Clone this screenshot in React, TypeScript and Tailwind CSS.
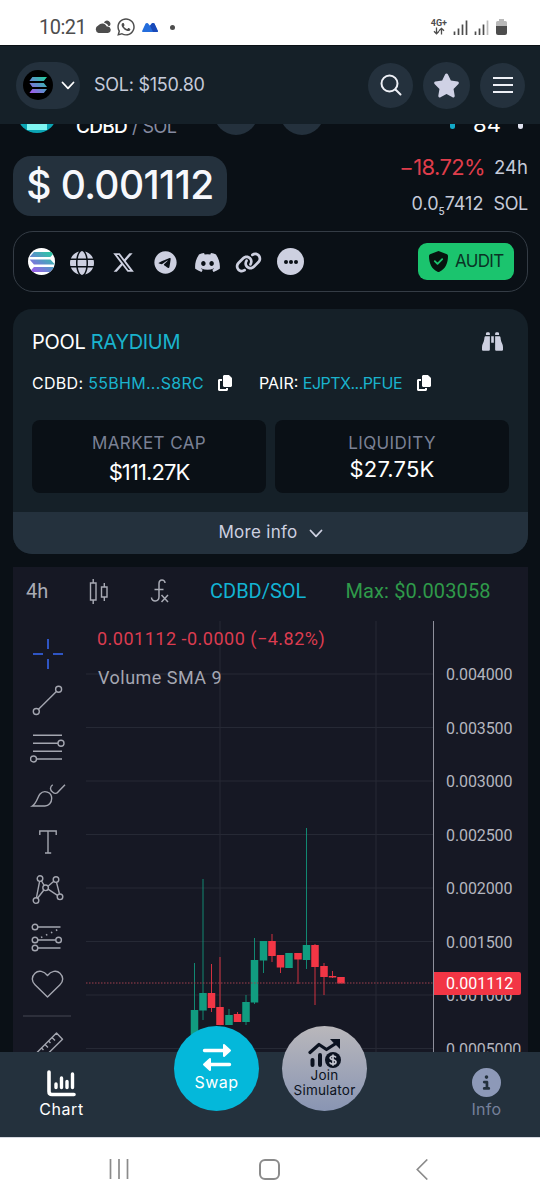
import React from 'react';
import {
  FaBinoculars,
  FaCircleInfo,
  FaCopy,
  FaDiscord,
  FaGlobe,
  FaLink,
  FaStar,
  FaTelegram,
  FaWhatsapp,
  FaXTwitter,
} from 'react-icons/fa6';

interface Candle {
  x: number;
  open: number;
  close: number;
  high: number;
  low: number;
  up: boolean;
}

// pixel positions inside the plot, open/close are top and bottom of the body
const candles: Candle[] = [
  { x: 109.5, open: 389, close: 431, high: 342, low: 431, up: true },
  { x: 118, open: 372, close: 389.5, high: 258, low: 399, up: true },
  { x: 126.5, open: 372, close: 387, high: 343, low: 391, up: false },
  { x: 135, open: 386, close: 404, high: 336, low: 404, up: false },
  { x: 144, open: 394, close: 404, high: 388, low: 404, up: true },
  { x: 152.5, open: 393, close: 401, high: 391, low: 401, up: false },
  { x: 161, open: 381, close: 401, high: 374, low: 404, up: true },
  { x: 169.5, open: 339, close: 381.5, high: 317, low: 383, up: true },
  { x: 178.5, open: 320, close: 339.5, high: 320, low: 352, up: true },
  { x: 187, open: 320, close: 335, high: 313, low: 341, up: false },
  { x: 195.5, open: 334, close: 346.5, high: 334, low: 352, up: false },
  { x: 204, open: 332, close: 347, high: 332, low: 347, up: true },
  { x: 213, open: 332, close: 338.5, high: 332, low: 363, up: false },
  { x: 221.5, open: 324, close: 339, high: 207, low: 348, up: true },
  { x: 230, open: 324, close: 346, high: 323, low: 384, up: false },
  { x: 239, open: 345, close: 356, high: 342, low: 374, up: false },
  { x: 247.5, open: 355, close: 356.5, high: 350, low: 357, up: false },
  { x: 256, open: 356, close: 362.5, high: 356, low: 362, up: false },
];

const prices = ['0.004000', '0.003500', '0.003000', '0.002500', '0.002000', '0.001500', '0.001000', '0.0005000'];

const gridRows = [53, 106.5, 160, 213.5, 267, 320.5, 374, 427.5];

const SolanaMark = ({ className }: { className: string }) => (
  <svg className={className} viewBox="0 0 18 16" preserveAspectRatio="none">
    <defs>
      <linearGradient id="sol" gradientUnits="userSpaceOnUse" x1="2" y1="16" x2="16" y2="0">
        <stop offset="0" stopColor="#a259ee" />
        <stop offset="0.5" stopColor="#5b91c9" />
        <stop offset="1" stopColor="#26cda0" />
      </linearGradient>
    </defs>
    <path fill="url(#sol)" d="M3.4 0H18l-3.2 4H.4zM.4 6h14.4L18 10H3.400zM3.400 12H18l-3.200 4H.4z" />
  </svg>
);

const ChevronDown = ({ className }: { className: string }) => (
  <svg className={className} viewBox="0 0 14 9" fill="none" stroke="currentColor" strokeWidth="1.800" strokeLinecap="round" strokeLinejoin="round">
    <path d="M1.500 1.500 7 7.300l5.500-5.800" />
  </svg>
);

const StatusBar = () => (
  <div className="flex h-[45px] shrink-0 items-center bg-white pt-[9px] pl-[39px] pr-[33px] text-[#4d4d4d]">
    <span className="font-[Roboto,sans-serif] text-[20px] leading-none tracking-[-0.5px]">10:21</span>
    <svg className="ml-2 h-[14px] w-[18px]" viewBox="0 0 18 14" fill="currentColor">
      <path d="M4.500 13a4 4 0 0 1-.3-7.500A5 5 0 0 1 12.800 6.500a3.300 3.300 0 0 1 1.200 6.500z" />
      <path d="M10 2.800a3.300 3.300 0 1 1 5.800 3l-1.300.4C14 4.500 12.200 3 10 2.800z" />
    </svg>
    <FaWhatsapp className="ml-1 h-5 w-5" />
    <svg className="ml-[6px] h-[9px] w-[16px]" viewBox="0 0 16 9">
      <path fill="#246ddc" d="M0 8.200 3.600.6Q4 0 5 0t1.500 1L8 2.800l1.500-2Q10 0 11 0t1.400.6L16 8.200q0 .8-1 .8H1q-1 0-1-.8z" />
      <path fill="#1949b8" d="M8 2.800 9.500.8Q10 0 11 0t1.400.6L16 8.200q0 .8-1 .8h-4z" />
    </svg>
    <span className="ml-[12px] h-[5px] w-[5px] rounded-full bg-[#4d4d4d]" />
    <div className="ml-auto flex items-center">
      <div className="flex flex-col items-center">
        <span className="font-[Roboto,sans-serif] text-[9px] leading-[8px] font-bold">4G+</span>
        <svg className="h-[8px] w-[12px]" viewBox="0 0 12 8" fill="none" stroke="currentColor" strokeWidth="1.300">
          <path d="M3.500.5v6M1 4.300l2.500 2.500L6 4.300M8.500 7.500v-6M6 3.800l2.500-2.500L11 3.800" />
        </svg>
      </div>
      <svg className="ml-[6px] h-[15px] w-[15px]" viewBox="0 0 15 15" stroke="currentColor" strokeWidth="1.700">
        <path d="M1.500 11.500V15M5.500 8.500V15M9.500 4.500V15M13.500.5V15" />
      </svg>
      <svg className="ml-[6px] h-[15px] w-[15px]" viewBox="0 0 15 15" stroke="currentColor" strokeWidth="1.700">
        <path d="M1.500 11.500V15M5.500 8.500V15M9.500 4.500V15" />
        <path stroke="#bdbdbd" d="M13.500.5V15" />
      </svg>
      <svg className="ml-[7px] h-[16px] w-[11px]" viewBox="0 0 11 16">
        <path fill="#b9b9b9" d="M3 0h5v2h1.500Q11 2 11 3.500V8H0V3.500Q0 2 1.500 2H3z" />
        <path fill="#4d4d4d" d="M0 7h11v7q0 2-2 2H2q-2 0-2-2z" />
      </svg>
    </div>
  </div>
);

const Header = () => (
  <header className="z-10 flex h-[79px] shrink-0 items-center border-t border-[#0b1116] bg-[#152028] pl-4 pr-[15px]">
    <div className="flex h-[47px] w-16 items-center rounded-full bg-[#24313d] pl-[7px]">
      <div className="flex h-[30px] w-[30px] items-center justify-center rounded-full bg-black">
        <SolanaMark className="h-4 w-[18px]" />
      </div>
      <ChevronDown className="ml-2 h-[9px] w-[14px] text-white" />
    </div>
    <span className="ml-[14px] -mt-px text-[18px] tracking-[-0.250px] text-[#c5cad9]">SOL: $150.80</span>
    <div className="ml-auto flex items-center gap-[10px]">
      <div className="flex h-[45px] w-[45px] items-center justify-center rounded-full bg-[#24313d]">
        <svg className="h-[22px] w-[22px] text-[#eef0f6]" viewBox="0 0 22 22" fill="none" stroke="currentColor" strokeWidth="2" strokeLinecap="round">
          <circle cx="9.500" cy="9.500" r="8" />
          <path d="m15.500 15.500 5 5" />
        </svg>
      </div>
      <div className="flex h-[47px] w-[47px] items-center justify-center rounded-full bg-[#24313d]">
        <FaStar className="h-[27px] w-[27px] text-[#cfd1e5]" />
      </div>
      <div className="flex h-[45px] w-[45px] flex-col items-center justify-center gap-[5px] rounded-full bg-[#24313d]">
        <span className="h-[2px] w-5 bg-[#eef0f6]" />
        <span className="h-[2px] w-5 bg-[#eef0f6]" />
        <span className="h-[2px] w-5 bg-[#eef0f6]" />
      </div>
    </div>
  </header>
);

// scrolled half way under the header
const TokenRow = () => (
  <div className="-mt-[34px] flex h-[46px] shrink-0 items-end leading-none whitespace-nowrap">
    <div className="ml-[4px] mb-[3px] flex h-10 w-10 shrink-0 items-end justify-center overflow-hidden rounded-full bg-[#0ba5b4]">
      <span className="mb-[3px] h-5 w-5 bg-[#7ff6f2]" />
    </div>
    <span className="ml-[19px] w-[52px] text-[19px] font-medium tracking-[-0.700px] text-white">CDBD</span>
    <span className="ml-[4px] w-[46px] text-[18px] tracking-[-0.500px] text-[#858aa0]">/ SOL</span>
    <span className="ml-[36px] mb-px h-[44px] w-[44px] shrink-0 rounded-full bg-[#24313d]" />
    <span className="ml-[22px] mb-px h-[44px] w-[44px] shrink-0 rounded-full bg-[#24313d]" />
    <span className="mb-[7px] ml-[126px] h-[14px] w-[5px] shrink-0 rounded-b-full bg-[#12a9c8]" />
    <span className="ml-[17px] mb-px w-[30px] text-center text-[22px] text-white">84</span>
    <span className="mb-[7px] ml-[16px] h-[14px] w-[5px] shrink-0 rounded-b-full bg-[#dfe1ee]" />
  </div>
);

const PriceRow = () => (
  <div className="mt-[20px] flex h-[60px] shrink-0 justify-between">
    <div className="flex h-[60px] w-[214px] items-center justify-center rounded-[18px] bg-[#24313d]">
      <span className="mb-px whitespace-nowrap text-[39px] font-medium tracking-[-0.600px] text-[#f7f8fc]">$ 0.001112</span>
    </div>
    <div className="flex flex-col items-end whitespace-nowrap">
      <div className="flex h-[23px] items-center gap-[9px]">
        <span className="text-[22px] tracking-[-0.600px] text-[#df3d4b]">−18.72%</span>
        <span className="text-[18.5px] text-[#c5cad9]">24h</span>
      </div>
      <div className="mt-[13px] flex h-[23px] items-center gap-[10px] text-[18px] text-[#c5cad9]">
        <span>
          0.0<span className="relative top-[5px] text-[10px] font-medium">5</span>7412
        </span>
        <span className="tracking-[-0.300px]">SOL</span>
      </div>
    </div>
  </div>
);

const LinksBar = () => (
  <div className="mt-[15px] flex h-[61px] shrink-0 items-center rounded-[20px] border border-[#343c45] pl-[14px] pr-[13px] text-[#cdd0e0]">
    <div className="flex h-[27px] w-[27px] items-center justify-center overflow-hidden rounded-full bg-white">
      <SolanaMark className="h-[20px] w-[26px]" />
    </div>
    <FaGlobe className="ml-[15px] mt-[2px] h-[24px] w-[24px]" />
    <FaXTwitter className="ml-[18px] mt-[2px] h-[23px] w-[23px]" />
    <FaTelegram className="ml-[19px] mt-[2px] h-[23px] w-[23px]" />
    <FaDiscord className="ml-[17px] mt-[2px] h-[27px] w-[27px]" />
    <FaLink className="ml-[14px] mt-[2px] h-[27px] w-[27px]" />
    <div className="ml-[15px] flex h-[27px] w-[27px] items-center justify-center gap-px rounded-full bg-[#cdd0e0]">
      <span className="h-1 w-1 rounded-full bg-[#0a1016]" />
      <span className="h-1 w-1 rounded-full bg-[#0a1016]" />
      <span className="h-1 w-1 rounded-full bg-[#0a1016]" />
    </div>
    <div className="ml-auto flex h-[37px] w-[96px] items-center rounded-[9px] bg-[#1bc46e] pl-[11px]">
      <svg className="h-[21px] w-[19px]" viewBox="0 0 19 21">
        <path fill="#07140f" d="M9.500 0 18 3.200Q19 3.600 19 5c0 7-2.500 13-8.500 15.700q-1 .5-2 0C2.500 18 0 12 0 5q0-1.400 1-1.800z" />
        <path fill="none" stroke="#1bc46e" strokeWidth="1.800" strokeLinecap="round" strokeLinejoin="round" d="m5.800 10.200 2.700 2.700 4.700-4.800" />
      </svg>
      <span className="ml-[7px] text-[17px] tracking-[-0.650px] text-[#0a3325]">AUDIT</span>
    </div>
  </div>
);

const StatBox = ({ label, value, lifted }: { label: string; value: string; lifted?: boolean }) => (
  <div className="flex h-[73px] flex-1 flex-col items-center rounded-lg bg-[#0a1016] pt-[11px]">
    <span className="text-[17px] leading-[24px] tracking-[0.400px] text-[#7a8195]">{label}</span>
    <span
      className={`text-[22px] leading-[28px] text-white ${lifted ? 'tracking-[0.200px]' : 'mt-[3px] tracking-[-0.900px]'}`}
    >
      {value}
    </span>
  </div>
);

const PoolCard = () => (
  <section className="mt-[17px] shrink-0 overflow-hidden rounded-[19px] bg-[#152028]">
    <div className="h-[203px] px-[19px]">
      <div className="flex h-[64px] items-center justify-between pr-[6px] pt-px">
        <h2 className="text-[20px] tracking-[-0.300px] text-white">
          POOL <span className="text-[#1ab3cd]">RAYDIUM</span>
        </h2>
        <FaBinoculars className="h-[21px] w-[21px] text-[#cdd0e0]" />
      </div>
      <div className="flex h-[20px] items-center whitespace-nowrap text-[16px] text-white">
        <span className="w-[186px] tracking-[0.300px]">
          CDBD: <span className="text-[#1ab3cd]">55BHM...S8RC</span>
        </span>
        <FaCopy className="h-4 w-[14px]" />
        <span className="ml-[27px] w-[158px]">
          PAIR: <span className="tracking-[-0.500px] text-[#1ab3cd]">EJPTX...PFUE</span>
        </span>
        <FaCopy className="h-4 w-[14px]" />
      </div>
      <div className="mt-[27px] flex gap-[9px]">
        <StatBox label="MARKET CAP" value="$111.27K" />
        <StatBox label="LIQUIDITY" value="$27.75K" lifted />
      </div>
    </div>
    <div className="flex h-[42px] items-center justify-center bg-[#24313d] pb-px text-[#cdd0e0]">
      <span className="text-[17px] tracking-[0.300px]">More info</span>
      <ChevronDown className="ml-[11px] mt-[2px] h-[9px] w-[14px]" />
    </div>
  </section>
);

const tools: { name: string; className: string; art: React.ReactNode }[] = [
  { name: 'cross', className: 'text-[#2f55c4]', art: <path strokeWidth="2" d="M3 18h10M23 18h10M18 3v10M18 23v10" /> },
  {
    name: 'trend',
    className: '',
    art: (
      <>
        <circle cx="6.300" cy="28.500" r="3" />
        <circle cx="28.600" cy="6.300" r="3" />
        <path d="M8.500 26.300 26.400 8.500" />
      </>
    ),
  },
  {
    name: 'fib',
    className: '',
    art: (
      <>
        <path d="M3 5.300h29M3 13.300h25M3 21.300h29M6.500 29H32" />
        <circle cx="31" cy="13.300" r="3" />
        <circle cx="3.500" cy="29" r="3" />
      </>
    ),
  },
  {
    name: 'brush',
    className: '',
    art: (
      <>
        <path d="M2.300 29C7 26 7.500 20 10 17c4-4.500 11.700-2 11.700 4.300 0 4.500-3 7.700-6.700 7.700z" />
        <path d="M22.700 7.700C19.500 10 20 13 22.500 15q3.500 3 6-.5L35 7.700" />
      </>
    ),
  },
  { name: 'text', className: '', art: <path d="M9.800 11V7h16.400v4M18 7v22M15 29h6.200" /> },
  {
    name: 'pattern',
    className: '',
    art: (
      <>
        <circle cx="10" cy="6.600" r="2.800" />
        <circle cx="26" cy="7.600" r="2.800" />
        <circle cx="15.600" cy="15.800" r="2.800" />
        <circle cx="6" cy="28.600" r="2.800" />
        <circle cx="30" cy="24.800" r="2.800" />
        <path d="M9.600 9.400 6.400 25.800M11.500 9l2.700 4.400M18 14.300 23.800 9.300M13.900 18 7.500 26.300M18 17.200l9.500 6.200M26.500 10.400l3 11.600" />
      </>
    ),
  },
  {
    name: 'forecast',
    className: '',
    art: (
      <>
        <circle cx="5" cy="8" r="2.800" />
        <circle cx="5" cy="21" r="2.800" />
        <circle cx="28.600" cy="21" r="2.800" />
        <circle cx="5" cy="29" r="2.800" />
        <path d="M8 8h22.500M8 21h17.800M8 29h22.500" />
        <path strokeDasharray="1.500 4" strokeWidth="1.600" d="M11 18.500 29 10" />
      </>
    ),
  },
  {
    name: 'heart',
    className: '',
    art: <path strokeLinejoin="round" d="M17.500 9.500C14 5 8.500 3.800 5 7.200c-3.700 3.500-3.500 8.300 0 11.600L17.500 31 30 18.800c3.500-3.300 3.700-8.100 0-11.600C26.500 3.800 21 5 17.500 9.500z" />,
  },
];

const DrawingTools = () => (
  <div className="flex h-full w-[72px] flex-col items-start pt-[9px] text-[#a4a6b0]">
    {tools.map((tool) => (
      <div key={tool.name} className="flex h-[47.2px] shrink-0 items-center pl-[17px]">
        <svg className={`h-9 w-9 ${tool.className}`} viewBox="0 0 36 36" fill="none" stroke="currentColor" strokeWidth="1.400">
          {tool.art}
        </svg>
      </div>
    ))}
    <span className="ml-[10px] mt-[7px] h-[2px] w-[48px] shrink-0 bg-[#2d2f3b]" />
    <svg className="ml-[17px] mt-[13px] h-9 w-9 shrink-0" viewBox="0 0 36 36" fill="none" stroke="currentColor" strokeWidth="1.400" strokeLinejoin="round">
      <path d="M26.500 3 32.500 9.200 9 32.500 3 26.500zM22 7.500l3 3M18.500 11l2 2M15 14.500l3 3M11.500 18l2 2" />
    </svg>
  </div>
);

const PricePlot = () => (
  <div className="relative h-[431px] w-[348px]">
    <svg className="h-[431px] w-[348px]" viewBox="0 0 348 431">
      <g stroke="#262935" strokeWidth="1">
        {gridRows.map((y) => (
          <path key={y} d={`M1 ${y}h347`} />
        ))}
        <path d="M135 0v431M291 0v431" />
      </g>
      {candles.map((c) => (
        <g key={c.x} fill={c.up ? '#119c80' : '#f23645'} stroke={c.up ? '#119c80' : '#f23645'}>
          <path strokeWidth="1" strokeOpacity="0.85" d={`M${c.x} ${c.high}V${c.low}`} />
          <rect stroke="none" x={c.x - 3.75} y={c.open} width="7.500" height={c.close - c.open} />
        </g>
      ))}
      <path stroke="#9e3f4d" strokeWidth="1.200" strokeDasharray="1.500 1.500" d="M1 362h347" />
    </svg>
    <div className="absolute top-[9px] left-[12px] flex flex-col whitespace-nowrap">
      <span className="text-[18px] leading-[18px] tracking-[0.500px] text-[#dc3c50]">0.001112 -0.0000 (−4.82%)</span>
      <span className="mt-[21px] ml-px text-[18px] leading-[18px] tracking-[0.480px] text-[#a5a7b2]">Volume SMA 9</span>
    </div>
  </div>
);

const PriceAxis = () => (
  <div className="relative flex h-[431px] w-[95px] flex-col border-l border-[#8e8f9b] pt-[27px] pl-[12px]">
    {prices.map((price) => (
      <span key={price} className="h-[53.5px] shrink-0 text-[16px] leading-[53.500px] tracking-[-0.100px] text-[#b4b5bf]">
        {price}
      </span>
    ))}
    <span className="absolute top-[351px] left-0 flex h-[23px] w-[87px] items-center rounded-r-[2px] bg-[#f23645] pl-[12px] text-[16px] text-white">
      0.001112
    </span>
  </div>
);

const ChartPanel = () => (
  <section className="mt-[13px] h-[485px] shrink-0 bg-[#161824] font-[Roboto,sans-serif]">
    <div className="flex h-[54px] items-center pl-[13px] pb-[6px] text-[20px] text-[#a9abb5]">
      <span className="w-[63px]">4h</span>
      <svg className="h-[27px] w-[20px]" viewBox="0 0 20 27" fill="none" stroke="currentColor" strokeWidth="1.400">
        <path d="M1.500 5h5.500v17H1.500zM4.200 1v4M4.200 22v4M12.500 9h5.500v10H12.500zM15.300 5v4M15.300 19v4" />
      </svg>
      <svg className="ml-[41px] h-[24px] w-[20px]" viewBox="0 0 20 24" fill="none" stroke="currentColor" strokeWidth="1.500">
        <path d="M15 4c0-3.800-6-4.300-6 .7v13c0 5.500-7.500 5.500-7.500.8M4.500 10.500h9M11.500 16l6.500 7M18 16l-6.500 7" />
      </svg>
      <span className="ml-[40px] text-[#12b3d3]">CDBD/SOL</span>
      <span className="ml-[39px] tracking-[0.150px] text-[#2f9a4a]">Max: $0.003058</span>
    </div>
    <div className="flex h-[431px]">
      <DrawingTools />
      <PricePlot />
      <PriceAxis />
    </div>
  </section>
);

const BottomNav = () => (
  <nav className="flex h-[85px] shrink-0 bg-[#24313d]">
    <div className="flex w-[123px] flex-col items-center pt-[18px]">
      <svg className="h-[27px] w-[29px]" viewBox="0 0 29 27" fill="none" stroke="#fff" strokeLinecap="round" strokeLinejoin="round">
        <path strokeWidth="3.600" d="M2 2v19.500q0 3 3 3h22" />
        <path strokeWidth="3.400" d="M9 14v3.500M14.500 8v9.500M20 11.500v6M25.500 4v13.500" />
      </svg>
      <span className="text-[16px] tracking-[0.600px] text-white">Chart</span>
    </div>
    <div className="z-10 -mt-[26px] ml-[51px] flex h-[85px] w-[85px] flex-col items-center rounded-full bg-[#04b8da] pt-[17px]">
      <svg className="h-[29px] w-[30px]" viewBox="0 0 30 29" fill="#fff" stroke="#fff" strokeLinejoin="round" strokeLinecap="round">
        <path fill="none" strokeWidth="3.400" d="M2.500 7.500H22M27.500 21.500H8" />
        <path strokeWidth="2" d="M22 2v11l6-5.500zM8 16v11l-6-5.500z" />
      </svg>
      <span className="text-[16px] leading-[20px] tracking-[0.500px] text-white">Swap</span>
    </div>
    <div className="z-10 -mt-[26px] ml-[23px] flex h-[85px] w-[85px] flex-col items-center rounded-full bg-linear-to-b from-[#b9b7bb] to-[#8995b3] pt-[13px] text-[#0b1220]">
      <svg className="h-[30px] w-[34px] shrink-0" viewBox="0 0 34 30" fill="none" stroke="currentColor">
        <path strokeWidth="3.200" strokeLinecap="round" strokeLinejoin="round" d="M2 13.500 11 5.500l7.500 5L28.500 4" />
        <path fill="currentColor" stroke="none" d="M22 0h10v10l-3-3-3.800-3.600z" />
        <path strokeWidth="4" strokeLinecap="round" d="M4.500 21v5M12 16v10" />
        <circle cx="25" cy="21" r="8" fill="currentColor" stroke="none" />
        <path stroke="#c4c6d0" strokeWidth="1.700" d="M28 18.500q-1-1.500-3-1.500t-2.800 1.700C22.200 21.500 28 20 28 23q0 2-3 2t-3-1.700M25 15.500v11.300" />
      </svg>
      <span className="-mt-px text-center text-[13.5px] leading-[14.500px] tracking-[0.200px]">
        Join
        <br />
        Simulator
      </span>
    </div>
    <div className="ml-auto flex w-[107px] flex-col items-center pt-[16px] text-[#8d99b8]">
      <FaCircleInfo className="h-[29px] w-[29px]" />
      <span className="text-[16px] tracking-[0.300px] text-[#75809a]">Info</span>
    </div>
  </nav>
);

const SystemNav = () => (
  <div className="flex h-[63px] shrink-0 items-center border-t border-[#d5d8e0] bg-white pl-[109px] text-[#8b8b8b]">
    <svg className="h-5 w-5" viewBox="0 0 20 20" stroke="currentColor" strokeWidth="1.700">
      <path d="M1.500 0v20M10 0v20M18.500 0v20" />
    </svg>
    <span className="ml-[130px] h-[21px] w-[21px] rounded-[6px] border-2 border-[#8b8b8b]" />
    <svg className="ml-[136px] h-[21px] w-[12px]" viewBox="0 0 12 21" fill="none" stroke="currentColor" strokeWidth="1.700">
      <path d="M11.300.5 1.300 10.500l10 10" />
    </svg>
  </div>
);

const App: React.FC = () => {
  return (
    <div className="flex h-[1200px] w-[540px] flex-col overflow-hidden bg-[#0a1016] font-[Inter,sans-serif]">
      <StatusBar />
      <Header />
      <main className="flex h-[928px] shrink-0 flex-col overflow-hidden pl-[13px] pr-[12px]">
        <TokenRow />
        <PriceRow />
        <LinksBar />
        <PoolCard />
        <ChartPanel />
      </main>
      <BottomNav />
      <SystemNav />
    </div>
  );
};

export default App;
